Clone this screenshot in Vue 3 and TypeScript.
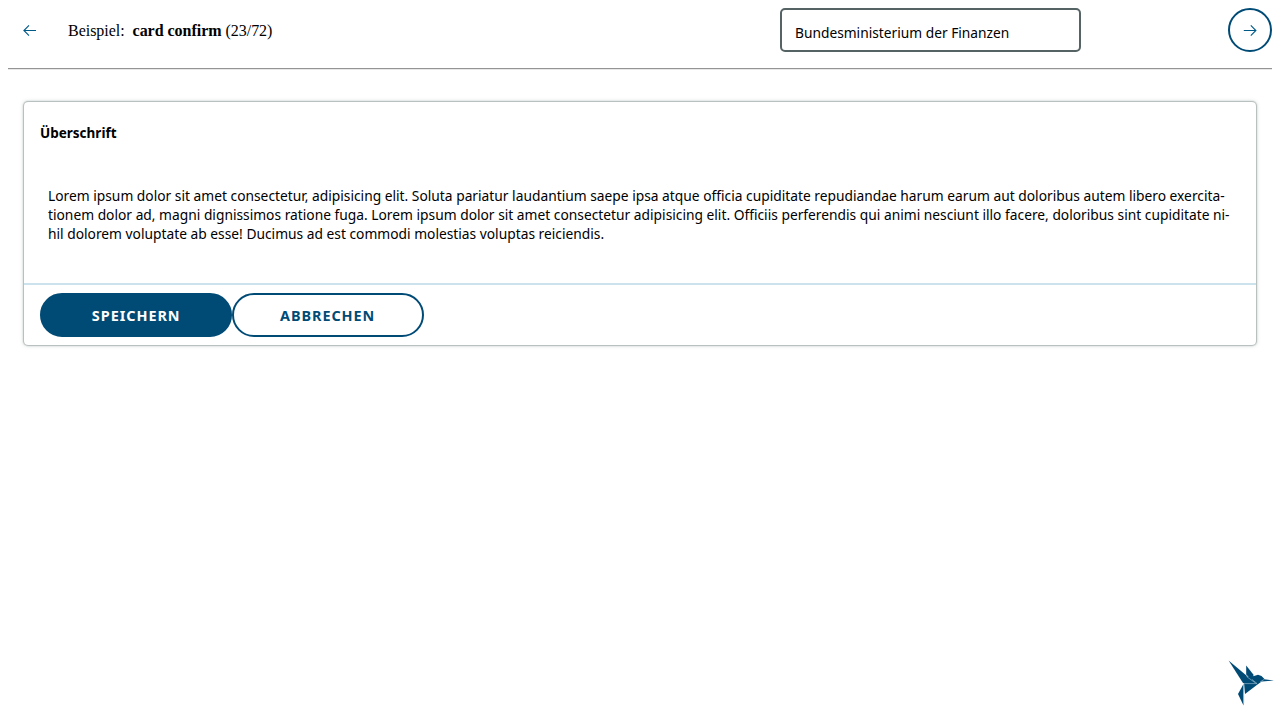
<script setup lang="ts">
const lines: string[] = [
  'Lorem ipsum dolor sit amet consectetur, adipisicing elit. Soluta pariatur laudantium saepe ipsa atque officia cupiditate repudiandae harum earum aut doloribus autem libero exercita-',
  'tionem dolor ad, magni dignissimos ratione fuga. Lorem ipsum dolor sit amet consectetur adipisicing elit. Officiis perferendis qui animi nesciunt illo facere, doloribus sint cupiditate ni-',
  'hil dolorem voluptate ab esse! Ducimus ad est commodi molestias voluptas reiciendis.',
]
</script>

<template>
  <div class="page">
    <header class="bar">
      <button class="round plain" aria-label="Zurück">
        <svg width="14" height="12" viewBox="0 0 14 12"><path d="M13 6.5H1M6 1.3L.9 6.5 6 11.6" /></svg>
      </button>
      <p class="title">Beispiel:&nbsp; <b>card confirm</b> (23/72)</p>
      <div class="select"><span class="select-text">Bundesministerium der Finanzen</span></div>
      <button class="round" aria-label="Weiter">
        <svg width="14" height="12" viewBox="0 0 14 12"><path d="M.8 6.5h12M7.8 1.3l5.1 5.2-5.1 5.1" /></svg>
      </button>
    </header>
    <hr class="rule" />
    <section class="card">
      <h2 class="heading"><span>Überschrift</span></h2>
      <p class="body">
        <span v-for="(line, i) in lines" :key="i" class="line">{{ line }}</span>
      </p>
      <footer class="actions">
        <button class="btn primary"><span>SPEICHERN</span></button>
        <button class="btn secondary"><span>ABBRECHEN</span></button>
      </footer>
    </section>
    <svg class="bird" width="46" height="46" viewBox="0 0 46 46">
      <path d="M.6 .6L19 16l5 7H15z" />
      <path d="M18.200 5.500l7.500 9.500-2.500 4.500-5-5z" />
      <path d="M18 17l8-1 4-1.200 3.500 1.200 3 3-3.500 3-3.500 2.500-12.500 9.500-1-11z" />
      <path d="M34 19l12 1.400-12 1.200z" />
      <path d="M15.500 24v21.500L10 34z" />
      <path class="seam" d="M15 23.600h14M15.700 24v19M18.500 16.500l9 6.500M24 19.500l5 4M32 22l4-2.500" />
    </svg>
  </div>
</template>

<style>
body {
  margin: 0;
  background: #fff;
}
</style>

<style scoped>
.page {
  box-sizing: border-box;
  height: 720px;
  padding: 8px;
  color: #000;
  font: 15px/19px 'Noto Sans', sans-serif;
}
.bar {
  display: flex;
  align-items: center;
  height: 44px;
}
.round {
  box-sizing: border-box;
  display: flex;
  align-items: center;
  justify-content: center;
  width: 44px;
  height: 44px;
  padding: 0;
  border: 2px solid #004b76;
  border-radius: 22px;
  background: none;
}
.round.plain {
  border-color: transparent;
}
.round svg {
  fill: none;
  stroke: #005a88;
  stroke-width: 1.1;
}
.title {
  width: 711.6px;
  margin: 0 0 0 16px;
  font: 16px/19px 'Liberation Serif', serif;
  letter-spacing: -0.03px;
  white-space: nowrap;
}
.select {
  box-sizing: border-box;
  width: 301.4px;
  height: 44px;
  margin-right: auto;
  padding: 13px 13.5px 0;
  border: 2px solid #566365;
  border-radius: 5px;
  white-space: nowrap;
}
.select-text,
.heading span,
.btn span {
  display: inline-block;
  transform: scaleX(0.917);
  transform-origin: left;
}
.heading span {
  transform: scaleX(0.9);
}
.btn span {
  transform: scaleX(0.96);
  transform-origin: center;
}
.rule {
  height: 0;
  margin: 16px 0 32px;
  border: 0 solid;
  border-width: 1px 0;
  border-color: #949494 #e8e8e8;
  border-top-color: #949494;
  border-bottom-color: #e8e8e8;
}
.card {
  height: 243px;
  margin: 0 16px;
  border-radius: 4px;
  box-shadow: 0 0 1px 1px #b4bcbc, 0 0 4px rgba(60, 80, 80, 0.35);
}
.heading {
  margin: 0;
  padding: 21px 16px 0;
  font-size: 15px;
  line-height: 19px;
}
.body {
  margin: 0;
  padding: 44px 24px 40px;
}
.line {
  display: block;
  width: max-content;
  white-space: nowrap;
  transform: scaleX(0.919);
  transform-origin: left;
}
.actions {
  display: flex;
  padding: 8px 16px;
  border-top: 2px solid #cce2ed;
}
.btn {
  box-sizing: border-box;
  width: 192px;
  height: 44px;
  padding: 0;
  border: 2px solid #004b76;
  border-radius: 22px;
  background: #fff;
  color: #004b76;
  font: 700 15px/19px 'Noto Sans', sans-serif;
  letter-spacing: 1px;
}
.btn.primary {
  background: #004b76;
  color: #fff;
}
.bird {
  position: fixed;
  left: 1228px;
  top: 660px;
  fill: #004b76;
}
.seam {
  fill: none;
  stroke: #a5c5d8;
  stroke-width: 0.6;
}
</style>
